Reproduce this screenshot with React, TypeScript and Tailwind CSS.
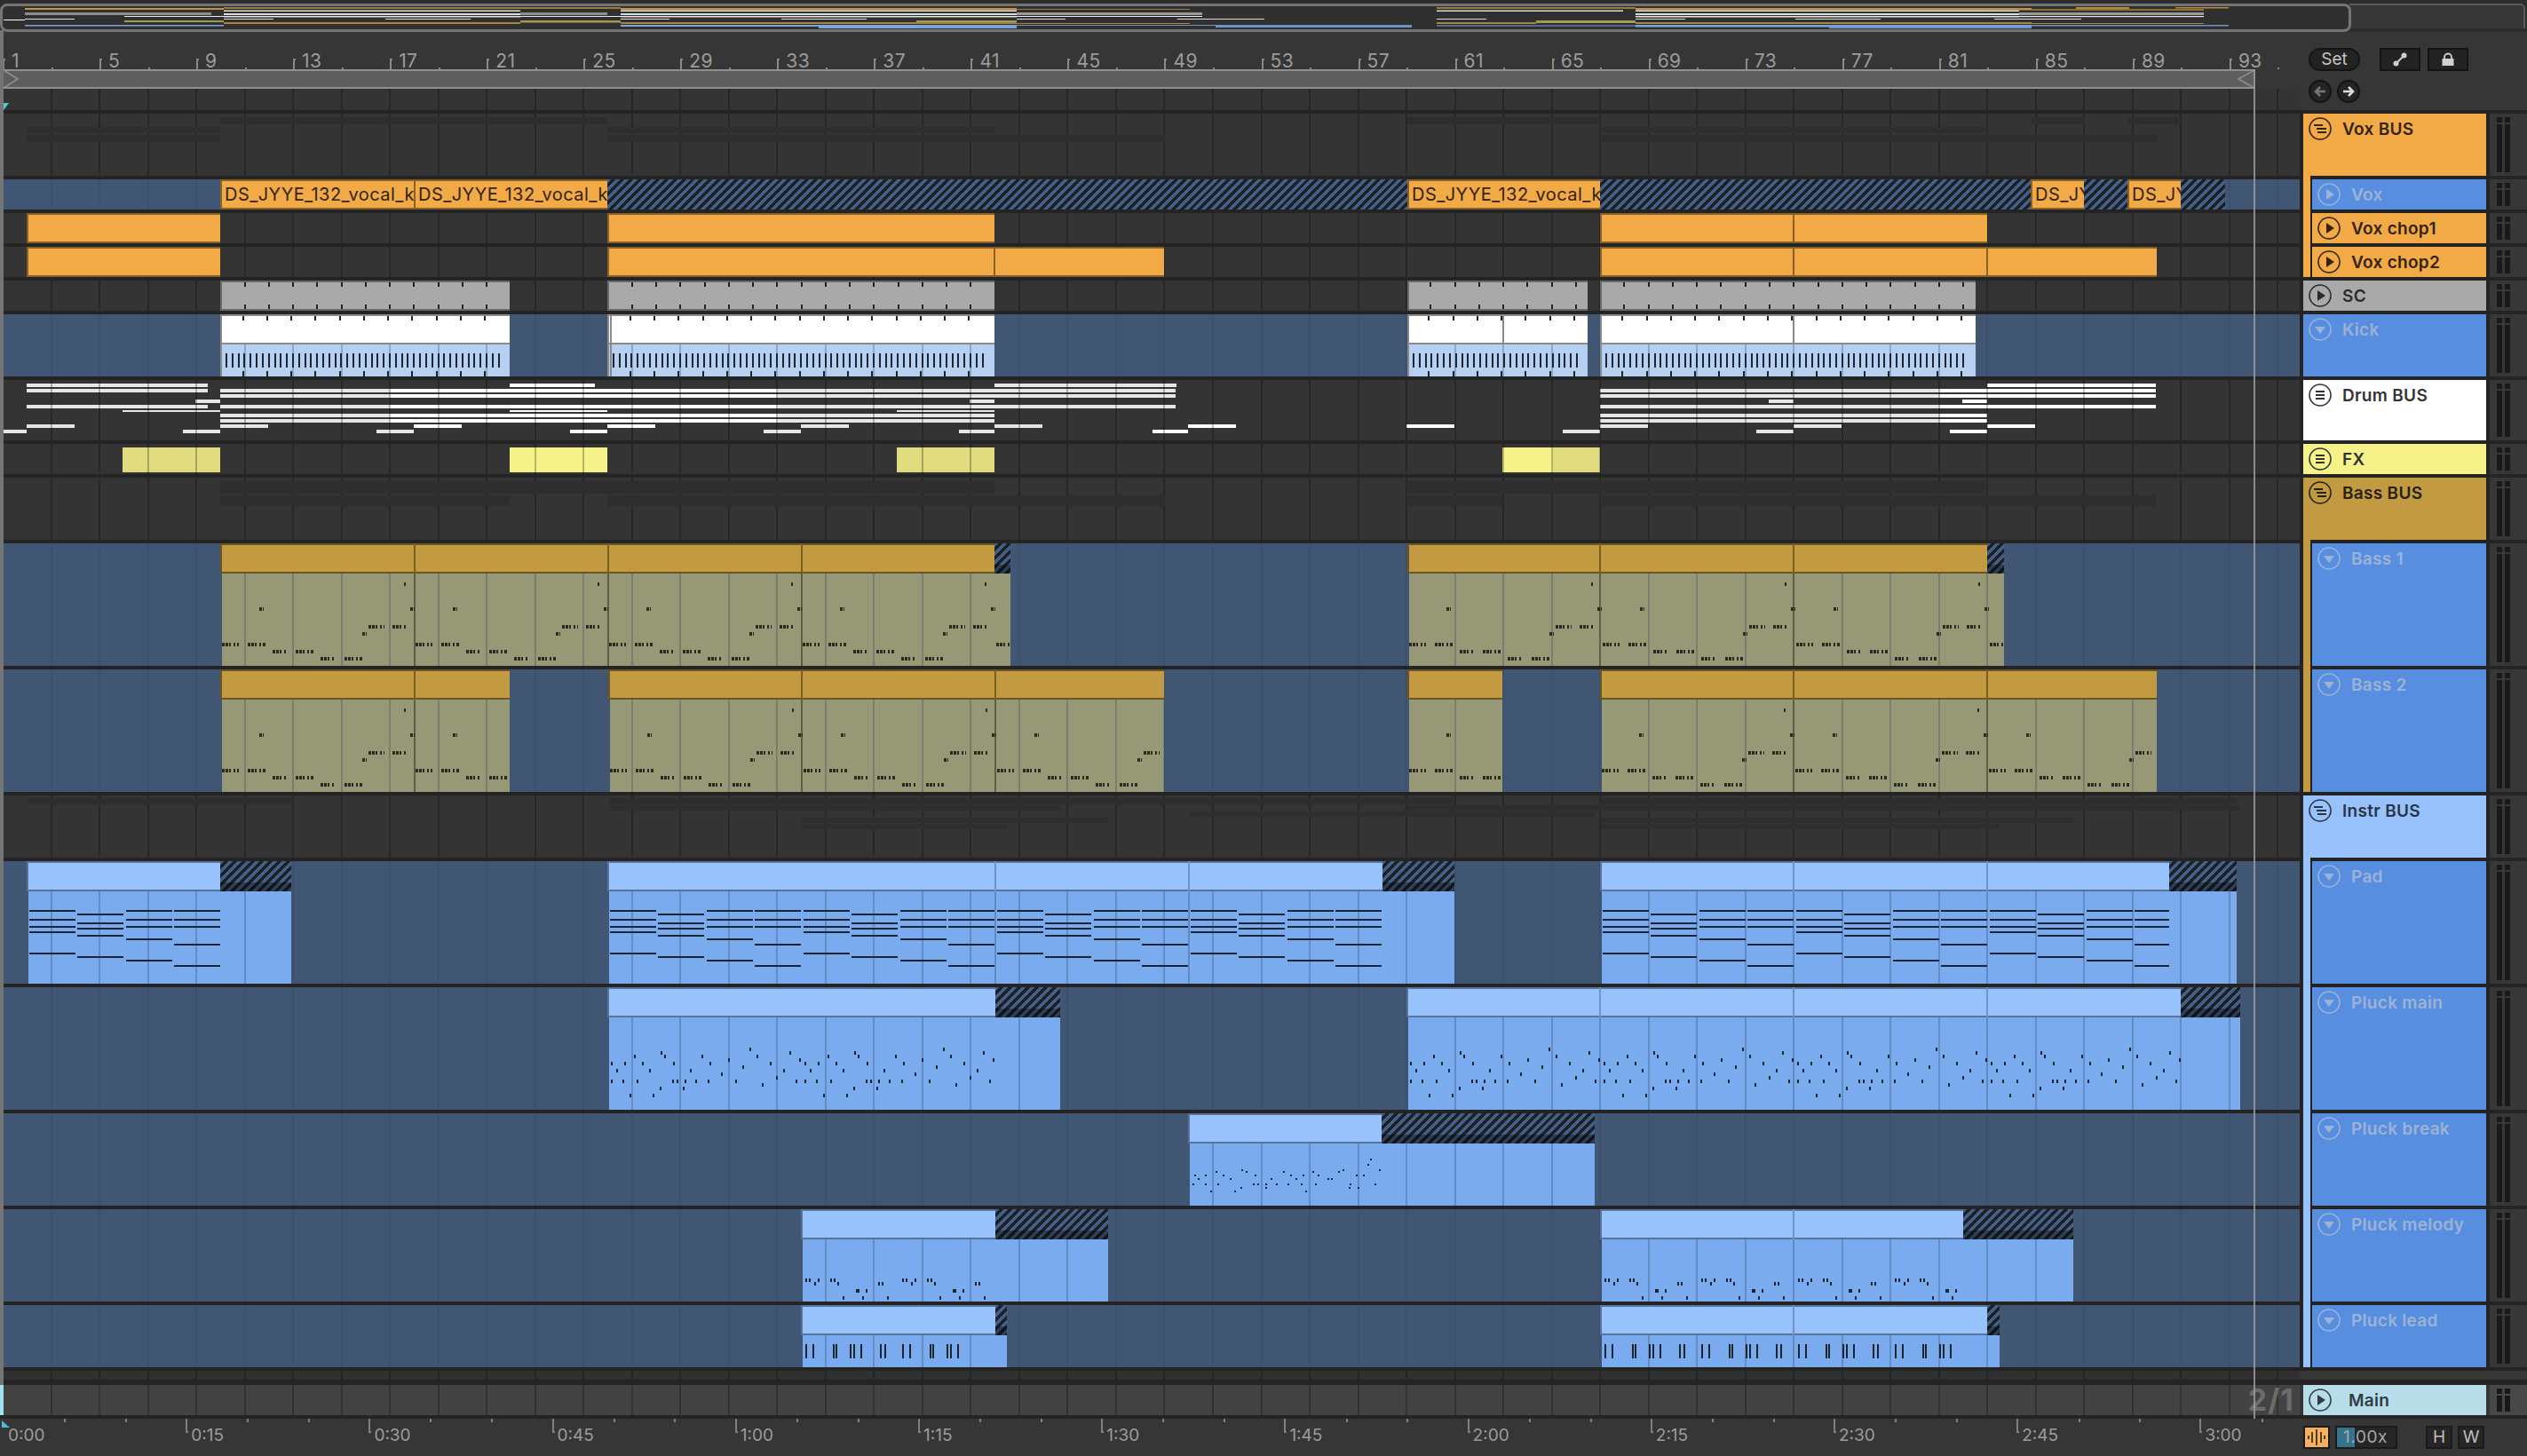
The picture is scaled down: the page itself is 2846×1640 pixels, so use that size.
import React from "react";

type Block = { x0: number; x1: number; head: number; splits?: number[] };
type Seg = [number, number];

const gridXs = Array.from({ length: 47 }, (_, i) => 3 + 54.52 * (i + 1));
const barX = (b: number) => 3 + 27.26 * (b - 1);

function Grid({ tone }: { tone: "dark" | "blue" }) {
  const cls = tone === "dark" ? "bg-black/25" : "bg-[rgba(50,70,100,0.3)]";
  return (
    <>
      {gridXs.map((x) => (
        <div key={x} className={`absolute top-0 bottom-0 w-[2px] ${cls}`} style={{ left: x - 1 }} />
      ))}
    </>
  );
}

/* ---------- midi note drawings ---------- */

function BassNotes({ w }: { w: number }) {
  const runs: [number, number, number][] = [
    [0, 19, 78], [29, 49, 78], [57, 73, 86], [83, 104, 86], [111, 127, 94], [138, 159, 94],
    [158, 163, 66], [165, 183, 58], [192, 209, 58], [42, 47, 38], [212, 217, 38], [205, 207, 10],
  ];
  const reps = Math.ceil(w / 218) + 1;
  return (
    <>
      {Array.from({ length: reps }).flatMap((_, r) =>
        runs.map(([a, b, y], i) => (
          <line
            key={`${r}-${i}`}
            x1={a + r * 218}
            x2={b + r * 218}
            y1={y + 2}
            y2={y + 2}
            stroke="#2b2b23"
            strokeWidth={4}
            strokeDasharray="3 1 3 1 2 3 2 2"
          />
        )),
      )}
    </>
  );
}

function PadNotes({ w }: { w: number }) {
  const pattern = [
    [21, 31, 39, 45, 69],
    [25, 35, 41, 49, 73],
    [21, 31, 39, 53, 77],
    [21, 31, 39, 59, 83],
  ];
  const n = Math.round(w / 54.5);
  return (
    <>
      {Array.from({ length: n }).flatMap((_, i) =>
        pattern[i % 4].map((y) => (
          <rect
            key={`${i}-${y}`}
            x={i * 54.5 + 0.5}
            y={y}
            width={Math.min(52, w - i * 54.5 - 0.5)}
            height={2}
            fill="#1b2431"
          />
        )),
      )}
    </>
  );
}

const pluckMain: [number, number][] = [
  [58, 38], [28, 42], [62, 42], [104, 42], [2, 50], [17, 50], [37, 50], [72, 50], [113, 50], [8, 58], [45, 58], [91, 58],
  [2, 70], [15, 70], [31, 70], [71, 70], [76, 70], [85, 70], [97, 70], [111, 70], [57, 78], [83, 78], [23, 86], [49, 86],
  [126, 62], [134, 46], [142, 70], [150, 54], [158, 34], [166, 42], [172, 74], [181, 50], [188, 66], [196, 58], [203, 38], [210, 70], [214, 46],
];

function PluckMainNotes({ w }: { w: number }) {
  const reps = Math.ceil(w / 218);
  return (
    <>
      {Array.from({ length: reps }).flatMap((_, r) =>
        pluckMain
          .filter(([x]) => x + r * 218 < w)
          .map(([x, y], i) => <rect key={`${r}-${i}`} x={x + r * 218} y={y} width={2} height={4} fill="#1b2431" />),
      )}
    </>
  );
}

const breakNotes: [number, number][] = [
  [5, 35], [9, 39], [17, 35], [3, 45], [17, 45], [23, 53], [29, 31], [37, 35], [31, 45], [45, 39], [50, 53], [57, 49], [58, 29], [63, 31],
  [73, 35], [71, 45], [76, 45], [85, 45], [85, 49], [91, 39], [97, 45], [105, 31], [113, 35], [110, 45], [119, 39], [127, 35], [125, 45],
  [130, 53], [138, 31], [144, 35], [141, 45], [155, 39], [159, 39], [167, 31], [172, 29], [180, 45], [179, 49], [189, 49], [187, 35], [195, 35],
  [200, 23], [203, 17], [213, 29], [208, 45],
];

function BreakNotes() {
  return (
    <>
      {breakNotes.map(([x, y], i) => (
        <rect key={i} x={x} y={y} width={2} height={2} fill="#1b2431" />
      ))}
    </>
  );
}

const melody: [number, number][] = [
  [3, 44], [7, 44], [17, 44], [13, 48], [31, 44], [35, 44], [39, 48], [45, 64], [60, 56], [62, 56], [71, 56], [67, 64], [85, 48], [89, 48], [95, 64],
];

function MelodyNotes({ w }: { w: number }) {
  const reps = Math.ceil(w / 109);
  return (
    <>
      {Array.from({ length: reps }).flatMap((_, r) =>
        melody
          .filter(([x]) => x + r * 109 < w)
          .map(([x, y], i) => <rect key={`${r}-${i}`} x={x + r * 109} y={y} width={2} height={4} fill="#1b2431" />),
      )}
    </>
  );
}

function LeadNotes({ w }: { w: number }) {
  const xs = [3, 11, 34, 37, 53, 57, 65, 87, 92];
  const reps = Math.ceil(w / 109);
  return (
    <>
      {Array.from({ length: reps }).flatMap((_, r) =>
        xs
          .filter((x) => x + r * 109 < w - 34)
          .map((x) => <rect key={`${r}-${x}`} x={x + r * 109} y={10} width={2} height={16} fill="#1b2431" />),
      )}
    </>
  );
}

/* ---------- clip lanes ---------- */

const GOLD = {
  edge: "bg-[#6d5522]",
  head: "bg-[#c19a41]",
  body: "bg-[#979875]",
  split: "bg-[#7a5f22]",
  bodySplit: "bg-[#5f5f48]",
  left: "bg-[#6d5522]",
};
const BLUE = {
  edge: "bg-[#56749c]",
  head: "bg-[#97c2fb]",
  body: "bg-[#7aabee]",
  split: "bg-[#6f94c4]",
  bodySplit: "bg-[#5f8ac2]",
  left: "bg-[#506c92]",
};

const HATCH = "bg-[repeating-linear-gradient(135deg,#42608a_0_3.5px,#1e2024_3.5px_7px)]";

function ClipLane({
  h,
  blocks,
  pal,
  notes,
}: {
  h: number;
  blocks: Block[];
  pal: typeof GOLD;
  notes: (w: number) => React.ReactNode;
}) {
  return (
    <div className="relative w-[2590px] overflow-hidden bg-[#415673]" style={{ height: h }}>
      {blocks.map((b) => (
        <div key={b.x0} className={`absolute top-[34px] bottom-0 ${pal.body}`} style={{ left: b.x0, width: b.x1 - b.x0 }} />
      ))}
      <Grid tone="blue" />
      {blocks.map((b) => (
        <React.Fragment key={b.x0}>
          <div className={`absolute top-0 h-[34px] ${pal.edge}`} style={{ left: b.x0 - 2, width: b.head - b.x0 + 2 }}>
            <div className={`absolute left-[2px] right-0 top-[2px] bottom-[2px] ${pal.head}`} />
          </div>
          {(b.splits ?? []).map((s) => (
            <React.Fragment key={s}>
              <div className={`absolute top-0 h-[34px] w-[2px] ${pal.split}`} style={{ left: s - 1 }} />
              <div className={`absolute top-[34px] bottom-0 w-[2px] ${pal.bodySplit}`} style={{ left: s - 1 }} />
            </React.Fragment>
          ))}
          {b.x1 > b.head && (
            <div className={`absolute top-0 h-[34px] ${HATCH}`} style={{ left: b.head, width: b.x1 - b.head }}>
              <div className="absolute left-0 right-0 bottom-0 h-[10px] bg-black/35" />
            </div>
          )}
          <svg
            className="absolute top-[34px]"
            style={{ left: b.x0 }}
            width={b.x1 - b.x0}
            height={h - 34}
            shapeRendering="crispEdges"
          >
            {notes(b.head - b.x0)}
          </svg>
        </React.Fragment>
      ))}
    </div>
  );
}

function DarkLane({ h, children, under }: { h: number; children?: React.ReactNode; under?: React.ReactNode }) {
  return (
    <div className="relative w-[2590px] overflow-hidden bg-[#343434]" style={{ height: h }}>
      {under}
      <Grid tone="dark" />
      {children}
    </div>
  );
}

function Shades({ rows }: { rows: [number, number, Seg[]][] }) {
  return (
    <>
      {rows.flatMap(([y, hh, segs], r) =>
        segs.map(([a, b]) => (
          <div key={`${r}-${a}`} className="absolute bg-[#2e2e2e]" style={{ left: a, width: b - a, top: y, height: hh }} />
        )),
      )}
    </>
  );
}

function VoxLane() {
  const ds: [number, number][] = [
    [248, 466],
    [466, 684],
    [1585, 1802],
    [2287, 2347],
    [2396, 2456],
  ];
  const hatch: Seg[] = [
    [684, 1585],
    [1802, 2287],
    [2347, 2396],
    [2456, 2506],
  ];
  return (
    <div className="relative h-[34px] w-[2590px] overflow-hidden bg-[#415673]">
      <Grid tone="blue" />
      {hatch.map(([a, b]) => (
        <div key={a} className={`absolute top-0 bottom-0 ${HATCH}`} style={{ left: a, width: b - a }} />
      ))}
      {ds.map(([a, b]) => (
        <div
          key={a}
          className="absolute top-0 bottom-0 overflow-hidden border-y-2 border-l-2 border-[#86622a] bg-[#f1aa46] pl-[3px] text-[20px] leading-[31px] tracking-[0.45px] whitespace-nowrap text-[#33230c]"
          style={{ left: a, width: b - a }}
        >
          DS_JYYE_132_vocal_k
        </div>
      ))}
    </div>
  );
}

function ChopLane({ blocks }: { blocks: Block[] }) {
  return (
    <DarkLane h={34}>
      {blocks.map((b) => (
        <div
          key={b.x0}
          className="absolute top-0 bottom-0 border-y-2 border-l-2 border-[#86622a] bg-[#f1aa46]"
          style={{ left: b.x0, width: b.x1 - b.x0 }}
        />
      ))}
      {blocks.flatMap((b) =>
        (b.splits ?? []).map((s) => <div key={s} className="absolute top-0 bottom-0 w-[2px] bg-[#86622a]" style={{ left: s - 1 }} />),
      )}
    </DarkLane>
  );
}

const drumClips: { x0: number; x1: number; splits: number[] }[] = [
  { x0: 248, x1: 574, splits: [] },
  { x0: 684, x1: 1120, splits: [] },
  { x0: 1585, x1: 1788, splits: [1693] },
  { x0: 1802, x1: 2225, splits: [2020] },
];

function barTicks(a: number, b: number) {
  const out: number[] = [];
  for (let i = 1; i < 100; i++) {
    const x = barX(i);
    if (x > a + 6 && x < b - 3) out.push(x - a);
  }
  return out;
}

function ScLane() {
  return (
    <DarkLane h={34}>
      {drumClips.map((c) => (
        <div
          key={c.x0}
          className="absolute top-0 bottom-0 border-y-2 border-l-2 border-[#6a6a6a] bg-[#a9a9a9]"
          style={{ left: c.x0, width: c.x1 - c.x0 }}
        >
          {barTicks(c.x0, c.x1).map((t) => (
            <React.Fragment key={t}>
              <div className="absolute top-0 h-[5px] w-[2px] bg-[#222]" style={{ left: t - 3 }} />
              <div className="absolute bottom-0 h-[5px] w-[2px] bg-[#222]" style={{ left: t - 3 }} />
            </React.Fragment>
          ))}
        </div>
      ))}
    </DarkLane>
  );
}

function KickLane() {
  return (
    <div className="relative h-[70px] w-[2590px] overflow-hidden bg-[#415673]">
      {drumClips.map((c) => (
        <div key={c.x0} className="absolute top-[34px] bottom-0 bg-[#b6d0f1]" style={{ left: c.x0, width: c.x1 - c.x0 }} />
      ))}
      <Grid tone="blue" />
      {drumClips.map((c) => {
        const w = c.x1 - c.x0;
        const notes = Array.from({ length: Math.floor((w - 8) / 6.815) }, (_, i) => 6 + i * 6.815);
        return (
          <div key={c.x0} className="absolute top-0 bottom-0" style={{ left: c.x0, width: w }}>
            <div className="absolute left-0 right-0 top-0 h-[34px] border-y-2 border-l-2 border-[#8a8a8a] bg-white" />
            <div className="absolute left-0 top-[34px] bottom-0 w-[2px] bg-[#8a8a8a]" />
            {c.x0 === 684 && <div className="absolute left-[3px] top-0 bottom-0 w-[2px] bg-[#8a8a8a]" />}
            {c.splits.map((s) => (
              <div key={s} className="absolute top-0 h-[34px] w-[2px] bg-[#8a8a8a]" style={{ left: s - c.x0 - 1 }} />
            ))}
            {barTicks(c.x0, c.x1).map((t) => (
              <React.Fragment key={t}>
                <div className="absolute top-[2px] h-[5px] w-[2px] bg-[#222]" style={{ left: t - 3 }} />
                <div className="absolute bottom-0 h-[6px] w-[2px] bg-[#222]" style={{ left: t - 3 }} />
              </React.Fragment>
            ))}
            <svg className="absolute left-0 top-[44px]" width={w} height={16} shapeRendering="crispEdges">
              {notes.map((n) => (
                <rect key={n} x={n} y={0} width={2} height={16} fill="#1d2530" />
              ))}
            </svg>
          </div>
        );
      })}
    </div>
  );
}

const G = "bg-[#e6e6e6]";
const W = "bg-white";
const drumRows: [number, number, [number, number, string][]][] = [
  [4, 4, [[30, 234, G], [574, 670, W], [1120, 1325, G], [2238, 2428, W]]],
  [10, 4, [[30, 234, G], [248, 439, G], [439, 875, W], [875, 1324, G], [1802, 2185, G], [2185, 2428, W]]],
  [16, 4, [[248, 439, G], [439, 875, W], [875, 1324, G], [1802, 2185, G], [2185, 2428, W]]],
  [22, 4, [[220, 248, G], [1092, 1120, G], [1992, 2020, G], [2210, 2238, W]]],
  [28, 4, [[30, 234, G], [248, 439, G], [439, 875, W], [875, 1324, G], [1802, 2185, G], [2185, 2428, W]]],
  [34, 2, [[138, 248, G], [574, 684, W], [1010, 1120, G]]],
  [38, 4, [[248, 439, G], [439, 875, W], [875, 1120, G], [1802, 2185, G], [2185, 2238, W]]],
  [44, 4, [[248, 439, G], [439, 875, W], [875, 1120, G], [1802, 2185, G], [2185, 2238, W]]],
  [50, 4, [[30, 84, G], [248, 302, G], [466, 520, W], [684, 738, W], [902, 956, G], [1120, 1174, G], [1338, 1392, W], [1584, 1638, W], [1802, 1856, G], [2020, 2074, G], [2238, 2292, W]]],
  [56, 4, [[4, 30, G], [206, 248, G], [424, 466, G], [642, 684, W], [860, 902, G], [1080, 1120, G], [1298, 1338, W], [1760, 1802, G], [1978, 2020, G], [2196, 2238, W]]],
];

function DrumLane() {
  return (
    <DarkLane
      h={68}
      under={drumRows.flatMap(([y, hh, segs]) =>
        segs.map(([a, b, c]) => <div key={`${y}-${a}`} className={`absolute ${c}`} style={{ left: a, width: b - a, top: y, height: hh }} />),
      )}
    />
  );
}

function FxLane() {
  const clips: [number, number, string][] = [
    [138, 248, "bg-[#dfdb7e]"],
    [574, 684, "bg-[#f6f28a]"],
    [1010, 1120, "bg-[#dfdb7e]"],
    [1692, 1749, "bg-[#f6f28a]"],
    [1749, 1802, "bg-[#dfdb7e]"],
  ];
  return (
    <DarkLane
      h={34}
      under={clips.map(([a, b, c]) => (
        <div key={a} className={`absolute top-[4px] h-[28px] ${c}`} style={{ left: a, width: b - a }} />
      ))}
    />
  );
}

/* ---------- track headers ---------- */

function CircleIcon({ color, kind }: { color: string; kind: "stair" | "equal" | "play" | "down" }) {
  return (
    <svg width={26} height={26} viewBox="0 0 26 26" className="shrink-0">
      <circle cx={13} cy={13} r={12} fill="none" stroke={color} strokeWidth={1.6} />
      {kind === "stair" && (
        <g stroke={color} strokeWidth={2}>
          <line x1={6} x2={16} y1={9} y2={9} />
          <line x1={9} x2={20} y1={13} y2={13} />
          <line x1={10} x2={20} y1={17} y2={17} />
        </g>
      )}
      {kind === "equal" && (
        <g stroke={color} strokeWidth={2}>
          <line x1={8} x2={18} y1={9} y2={9} />
          <line x1={8} x2={18} y1={13} y2={13} />
          <line x1={8} x2={18} y1={17} y2={17} />
        </g>
      )}
      {kind === "play" && <path d="M10 7 L19 13 L10 19 Z" fill={color} />}
      {kind === "down" && <path d="M7 10 L19 10 L13 18 Z" fill={color} />}
    </svg>
  );
}

function Meter({ light }: { light?: boolean }) {
  return (
    <div className={`flex h-full flex-1 gap-[3px] pl-[8px] pt-[4px] pb-[4px] ${light ? "bg-[#484848]" : "bg-[#373737]"}`}>
      {[0, 1].map((i) => (
        <div key={i} className="flex w-[6px] flex-col gap-[2px]">
          <div className="h-[6px] bg-[#191919]" />
          <div className="flex-1 bg-[#191919]" />
        </div>
      ))}
    </div>
  );
}

type Head = {
  name: string;
  bg: string;
  text: string;
  icon: string;
  kind: "stair" | "equal" | "play" | "down";
  strip?: string;
};

function TrackHead({ name, bg, text, icon, kind, strip }: Head) {
  const label = (
    <div className="flex h-[34px] items-start gap-[12px] pl-[6px] pt-[4px]">
      <CircleIcon color={icon} kind={kind} />
      <span className={`mt-[1px] text-[19px] leading-[26px] font-semibold tracking-[0.3px] ${text}`}>{name}</span>
    </div>
  );
  if (strip) {
    return (
      <div className="ml-[4px] flex w-[206px]">
        <div className={`relative w-[8px] ${strip}`}>
          <div className={`absolute -top-[4px] left-0 h-[4px] w-[8px] ${strip}`} />
        </div>
        <div className={`ml-[2px] flex-1 ${bg}`}>{label}</div>
      </div>
    );
  }
  return <div className={`ml-[4px] w-[206px] ${bg}`}>{label}</div>;
}

function Row({ head, children }: { head: Head; children: React.ReactNode }) {
  return (
    <div className="flex">
      {children}
      <TrackHead {...head} />
      <div className="ml-[4px] flex flex-1">
        <Meter />
      </div>
    </div>
  );
}

const dimText = "text-[#9db3d6]";
const dimIcon = "#9db3d6";
const blueBg = "bg-[#578ee0]";
const ORANGE = "bg-[#f1aa46]";
const goldBg = "bg-[#c19a41]";
const sky = "bg-[#97c2fb]";
const brown = "#33230c";

/* ---------- top and bottom ---------- */

const overviewRects: [number, number, number, number, string][] = [
  [28, 252, 9, 2, "#c8923f"], [252, 699, 8, 2, "#9c7a3c"], [699, 1145, 9, 2.5, "#c8923f"], [1145, 1340, 10, 1, "#9c7a3c"],
  [1618, 1842, 8, 2, "#9c7a3c"], [1842, 2288, 9, 2.5, "#c8923f"], [2288, 2482, 10, 2, "#8f7034"], [2338, 2398, 8, 2, "#b88a40"], [2450, 2510, 8, 1.5, "#b88a40"],
  [252, 586, 11.5, 1.5, "#dddddd"], [699, 1145, 11.5, 1.5, "#dddddd"], [1618, 1828, 11.5, 1.5, "#dddddd"], [1842, 2274, 11.5, 1.5, "#dddddd"],
  [28, 238, 14, 3, "#8e8e8e"], [586, 684, 14, 3, "#8e8e8e"], [1145, 1354, 14, 3, "#9a9a9a"], [2274, 2482, 14, 3, "#9a9a9a"],
  [252, 586, 15, 2, "#dddddd"], [699, 1145, 15, 2, "#dddddd"], [1842, 2274, 15, 2, "#dddddd"],
  [140, 1354, 18, 1, "#e8e8e8"], [1842, 2482, 18, 1.2, "#e8e8e8"], [252, 586, 19.2, 0.8, "#999999"], [699, 1145, 19.2, 0.8, "#999999"], [1842, 2274, 19.2, 0.8, "#999999"],
  [28, 84, 21, 1, "#dddddd"], [252, 308, 21, 1, "#dddddd"], [434, 530, 21, 1, "#dddddd"], [699, 754, 21, 1, "#dddddd"], [880, 976, 21, 1, "#dddddd"],
  [1145, 1200, 21, 1, "#dddddd"], [1326, 1424, 21, 1, "#dddddd"], [1618, 1674, 21, 1, "#dddddd"], [1842, 1898, 21, 1, "#dddddd"], [2022, 2118, 21, 1, "#dddddd"], [2246, 2344, 21, 1, "#dddddd"],
  [4, 28, 22, 1, "#ffffff"],
  [140, 252, 23, 2, "#a29a50"], [586, 699, 23, 2.5, "#a29a50"], [1032, 1145, 23, 2.5, "#a29a50"], [1730, 1842, 23, 3, "#a29a50"],
  [252, 586, 25, 2, "#a8853a"], [699, 1145, 25, 2, "#a8853a"], [1145, 1340, 26, 1, "#a8853a"], [1618, 1730, 25, 2, "#a8853a"], [1842, 2288, 25, 2, "#a8853a"], [2288, 2482, 26, 1, "#a8853a"],
  [28, 252, 28, 1.5, "#7aa6e0"], [699, 1145, 28, 2, "#7aa6e0"], [922, 1145, 29.5, 2.5, "#7aa6e0"], [1145, 1369, 28, 1, "#6d93c8"], [1369, 1590, 28, 3, "#6d93c8"],
  [1618, 1842, 28, 2, "#4f6a92"], [1842, 2288, 28, 2.5, "#7aa6e0"], [2060, 2288, 30.5, 1.5, "#7aa6e0"], [2288, 2510, 28, 1.5, "#6d93c8"],
];

function Overview() {
  return (
    <div className="relative h-[36px] w-full bg-[#2d2d2d]">
      <div className="absolute left-[2646px] right-[2px] top-[4px] h-[28px] rounded-tr-[6px] border-t-2 border-r-2 border-[#5c5c5c] bg-[#363636]" />
      <div className="absolute left-0 top-[4px] h-[32px] w-[2648px] rounded-[8px] border-[3px] border-[#757575] bg-[#303030]" />
      <svg className="absolute left-0 top-0" width={2646} height={36}>
        {overviewRects.map(([a, b, y, hh, c], i) => (
          <rect key={i} x={a} y={y} width={b - a} height={hh} fill={c} />
        ))}
      </svg>
    </div>
  );
}

function Ruler() {
  const labels = Array.from({ length: 24 }, (_, i) => 1 + i * 4);
  return (
    <div className="relative h-[42px] w-[2590px]">
      {labels.map((b) => {
        const x = barX(b);
        return (
          <React.Fragment key={b}>
            <div className="absolute top-[30px] bottom-0 w-[2px] bg-[#8a8a8a]" style={{ left: x }} />
            <div className="absolute top-[30px] h-[2px] w-[3px] bg-[#8a8a8a]" style={{ left: x }} />
            <div className="absolute bottom-0 h-[2px] w-[2px] bg-[#8a8a8a]" style={{ left: x + 54.5 }} />
            <span className="absolute top-[21px] text-[21px] leading-[24px] tracking-[0.4px] text-[#9c9c9c]" style={{ left: x + 10 }}>
              {b}
            </span>
          </React.Fragment>
        );
      })}
    </div>
  );
}

function LoopBar() {
  return (
    <div className="relative h-[22px] w-[2539px] border-y-2 border-[#8f8f8f] bg-[#5e5e5e]">
      <svg className="absolute left-[2px] -top-[2px]" width={20} height={22}>
        <path d="M2 1 L18 11 L2 21" fill="none" stroke="#8f8f8f" strokeWidth={1.5} />
      </svg>
      <svg className="absolute right-0 -top-[2px]" width={20} height={22}>
        <path d="M20 1 L2 11 L20 21" fill="none" stroke="#8f8f8f" strokeWidth={1.5} />
      </svg>
    </div>
  );
}

function TopControls() {
  return (
    <div className="ml-[10px] flex flex-col gap-[10px] pt-[18px]">
      <div className="flex items-center">
        <div className="flex h-[26px] w-[58px] items-center justify-center rounded-full border-2 border-[#141414] bg-[#222] text-[19px] text-[#c4c4c4]">
          Set
        </div>
        <div className="ml-[22px] flex h-[26px] w-[46px] items-center justify-center border-2 border-[#141414] bg-[#232323]">
          <svg width={16} height={16} viewBox="0 0 16 16">
            <line x1={3} y1={13} x2={13} y2={3} stroke="#d0d0d0" strokeWidth={2} />
            <circle cx={12.5} cy={3.5} r={3} fill="#d0d0d0" />
            <circle cx={3.5} cy={12.5} r={3} fill="#d0d0d0" />
          </svg>
        </div>
        <div className="ml-[8px] flex h-[26px] w-[46px] items-center justify-center border-2 border-[#141414] bg-[#232323]">
          <svg width={16} height={16} viewBox="0 0 16 16">
            <path d="M4 7 V5.5 a4 4 0 0 1 8 0 V7" fill="none" stroke="#d0d0d0" strokeWidth={1.8} />
            <rect x={1.5} y={7} width={13} height={8} fill="#d0d0d0" />
          </svg>
        </div>
      </div>
      <div className="flex gap-[6px]">
        {[
          { d: "M15 9 H6 M9 4 L4 9 L9 14", c: "#777777" },
          { d: "M3 9 H12 M9 4 L14 9 L9 14", c: "#dddddd" },
        ].map((a) => (
          <div key={a.d} className="flex h-[26px] w-[26px] items-center justify-center rounded-full border-2 border-[#141414] bg-[#242424]">
            <svg width={18} height={18} viewBox="0 0 18 18">
              <path d={a.d} fill="none" stroke={a.c} strokeWidth={2.6} />
            </svg>
          </div>
        ))}
      </div>
    </div>
  );
}

function TimeRuler() {
  const labels = ["0:00", "0:15", "0:30", "0:45", "1:00", "1:15", "1:30", "1:45", "2:00", "2:15", "2:30", "2:45", "3:00"];
  const minor = Array.from({ length: 38 }, (_, i) => 3 + 68.75 * i).filter((_, i) => i % 3 !== 0);
  return (
    <div className="relative h-[42px] w-[2590px]">
      {minor.map((x) => (
        <div key={x} className="absolute top-0 h-[4px] w-[2px] bg-[#808080]" style={{ left: x }} />
      ))}
      {labels.map((l, i) => {
        const x = 3 + 206.2 * i;
        return (
          <React.Fragment key={l}>
            {i > 0 && (
              <>
                <div className="absolute top-0 h-[16px] w-[2px] bg-[#808080]" style={{ left: x }} />
                <div className="absolute top-[14px] h-[2px] w-[3px] bg-[#808080]" style={{ left: x }} />
              </>
            )}
            <span className="absolute top-[7px] text-[19px] leading-[24px] text-[#9c9c9c]" style={{ left: x + 6 }}>
              {l}
            </span>
          </React.Fragment>
        );
      })}
    </div>
  );
}

function BottomControls() {
  return (
    <div className="ml-[4px] flex items-start pt-[8px]">
      <div className="flex h-[26px] w-[30px] items-center justify-center border-2 border-[#1b1b1b] bg-[#f6b160]">
        <svg width={22} height={18} viewBox="0 0 22 18">
          <g stroke="#2a2010" strokeWidth={1.6}>
            <line x1={2} x2={2} y1={7} y2={11} />
            <line x1={6} x2={6} y1={3} y2={15} />
            <line x1={11} x2={11} y1={0} y2={18} />
            <line x1={16} x2={16} y1={3} y2={15} />
            <line x1={20} x2={20} y1={7} y2={11} />
          </g>
        </svg>
      </div>
      <div className="relative ml-[6px] flex h-[26px] w-[70px] items-center overflow-hidden border-2 border-[#1b1b1b] bg-[#262626] pl-[7px] text-[19px] tracking-[0.6px] text-[#a8a8a8]">
        <div className="absolute left-0 top-0 bottom-0 w-[20px] bg-[#35748a]" />
        <span className="relative">1.00x</span>
      </div>
      {["H", "W"].map((k, i) => (
        <div
          key={k}
          className={`flex h-[26px] w-[30px] items-center justify-center border-2 border-[#1b1b1b] bg-[#262626] text-[19px] text-[#bdbdbd] ${i === 0 ? "ml-[32px]" : "ml-[6px]"}`}
        >
          {k}
        </div>
      ))}
    </div>
  );
}

/* ---------- data ---------- */

const bass1: Block[] = [
  { x0: 250, x1: 1138, head: 1120, splits: [467, 685, 903] },
  { x0: 1587, x1: 2257, head: 2238, splits: [1802, 2020] },
];
const bass2: Block[] = [
  { x0: 250, x1: 574, head: 574, splits: [467] },
  { x0: 687, x1: 1311, head: 1311, splits: [903, 1121] },
  { x0: 1587, x1: 1692, head: 1692 },
  { x0: 1804, x1: 2429, head: 2429, splits: [2020, 2238] },
];
const pad: Block[] = [
  { x0: 32, x1: 328, head: 248 },
  { x0: 686, x1: 1638, head: 1557, splits: [1121, 1339] },
  { x0: 1804, x1: 2519, head: 2443, splits: [2020, 2238] },
];
const pluckM: Block[] = [
  { x0: 686, x1: 1194, head: 1121 },
  { x0: 1586, x1: 2523, head: 2456, splits: [1802, 2020, 2238] },
];
const pluckB: Block[] = [{ x0: 1340, x1: 1796, head: 1556 }];
const pluckMel: Block[] = [
  { x0: 904, x1: 1248, head: 1121 },
  { x0: 1804, x1: 2335, head: 2211, splits: [2020] },
];
const pluckL: Block[] = [
  { x0: 904, x1: 1134, head: 1121 },
  { x0: 1804, x1: 2252, head: 2238, splits: [2020] },
];

const head = (name: string, strip?: string): Head => ({
  name,
  bg: blueBg,
  text: dimText,
  icon: dimIcon,
  kind: "down",
  strip,
});

export default function App() {
  return (
    <div className="relative flex h-[1640px] w-[2846px] flex-col overflow-hidden bg-[#363636] [font-family:Inter,sans-serif]">
      <Overview />

      {/* ruler, loop bar and controls */}
      <div className="flex h-[88px]">
        <div className="flex w-[2590px] flex-col">
          <Ruler />
          <LoopBar />
          <div className="relative h-[24px] w-[2590px] overflow-hidden bg-[#343434]">
            <Grid tone="dark" />
          </div>
        </div>
        <TopControls />
      </div>

      {/* tracks */}
      <div className="flex flex-col gap-[4px] bg-[#242424] py-[4px]">
        <Row head={{ name: "Vox BUS", bg: ORANGE, text: "text-[#33230c]", icon: brown, kind: "stair" }}>
          <DarkLane h={70}>
            <Shades
              rows={[
                [4, 8, [[248, 684], [1585, 1802], [2287, 2347], [2396, 2456]]],
                [15, 7, [[30, 248], [684, 1120], [1802, 2238]]],
                [24, 8, [[30, 248], [684, 1312], [1802, 2429]]],
              ]}
            />
          </DarkLane>
        </Row>
        <Row head={{ ...head("Vox", ORANGE), kind: "play" }}>
          <VoxLane />
        </Row>
        <Row head={{ name: "Vox chop1", bg: ORANGE, text: "text-[#33230c]", icon: brown, kind: "play", strip: ORANGE }}>
          <ChopLane blocks={[{ x0: 30, x1: 248, head: 248 }, { x0: 684, x1: 1120, head: 1120 }, { x0: 1802, x1: 2238, head: 2238, splits: [2020] }]} />
        </Row>
        <Row head={{ name: "Vox chop2", bg: ORANGE, text: "text-[#33230c]", icon: brown, kind: "play", strip: ORANGE }}>
          <ChopLane blocks={[{ x0: 30, x1: 248, head: 248 }, { x0: 684, x1: 1311, head: 1311, splits: [1120] }, { x0: 1802, x1: 2429, head: 2429, splits: [2020, 2238] }]} />
        </Row>
        <Row head={{ name: "SC", bg: "bg-[#a9a9a9]", text: "text-[#2a2a2a]", icon: "#2a2a2a", kind: "play" }}>
          <ScLane />
        </Row>
        <Row head={{ ...head("Kick") }}>
          <KickLane />
        </Row>
        <Row head={{ name: "Drum BUS", bg: "bg-white", text: "text-[#333]", icon: "#333333", kind: "equal" }}>
          <DrumLane />
        </Row>
        <Row head={{ name: "FX", bg: "bg-[#f6f28a]", text: "text-[#333]", icon: "#333333", kind: "equal" }}>
          <FxLane />
        </Row>
        <Row head={{ name: "Bass BUS", bg: goldBg, text: "text-[#2a2010]", icon: "#2a2010", kind: "stair" }}>
          <DarkLane h={70}>
            <Shades
              rows={[
                [4, 14, [[248, 1120], [1584, 2238]]],
                [20, 12, [[248, 574], [684, 1312], [1584, 1692], [1802, 2428]]],
              ]}
            />
          </DarkLane>
        </Row>
        <Row head={head("Bass 1", goldBg)}>
          <ClipLane h={138} blocks={bass1} pal={GOLD} notes={(w) => <BassNotes w={w} />} />
        </Row>
        <Row head={head("Bass 2", goldBg)}>
          <ClipLane h={138} blocks={bass2} pal={GOLD} notes={(w) => <BassNotes w={w} />} />
        </Row>
        <Row head={{ name: "Instr BUS", bg: sky, text: "text-[#2a3444]", icon: "#2a3444", kind: "stair" }}>
          <DarkLane h={70}>
            <Shades
              rows={[
                [3, 7, [[32, 328], [686, 1638], [1803, 2519]]],
                [11, 6, [[686, 1194], [1585, 2523]]],
                [18, 6, [[1340, 1796]]],
                [25, 6, [[903, 1248], [1803, 2335]]],
                [32, 6, [[903, 1134], [1803, 2252]]],
              ]}
            />
          </DarkLane>
        </Row>
        <Row head={head("Pad", sky)}>
          <ClipLane h={138} blocks={pad} pal={BLUE} notes={(w) => <PadNotes w={w} />} />
        </Row>
        <Row head={head("Pluck main", sky)}>
          <ClipLane h={138} blocks={pluckM} pal={BLUE} notes={(w) => <PluckMainNotes w={w} />} />
        </Row>
        <Row head={head("Pluck break", sky)}>
          <ClipLane h={104} blocks={pluckB} pal={BLUE} notes={() => <BreakNotes />} />
        </Row>
        <Row head={head("Pluck melody", sky)}>
          <ClipLane h={104} blocks={pluckMel} pal={BLUE} notes={(w) => <MelodyNotes w={w} />} />
        </Row>
        <Row head={head("Pluck lead", sky)}>
          <ClipLane h={70} blocks={pluckL} pal={BLUE} notes={(w) => <LeadNotes w={w} />} />
        </Row>
      </div>

      {/* bottom strip and main track */}
      <div className="flex h-[10px]">
        <div className="relative h-full w-[2590px] overflow-hidden bg-[#303030]">
          <Grid tone="dark" />
        </div>
        <div className="ml-[4px] h-full flex-1 bg-[#363636]" />
      </div>
      <div className="h-[6px] bg-[#242424]" />
      <div className="flex h-[34px]">
        <div className="relative h-full w-[2590px] overflow-hidden bg-[#434343]">
          <Grid tone="dark" />
          <div className="absolute left-0 top-0 bottom-0 z-10 w-[4px] bg-[#9fe2f0]" />
          <span className="absolute right-[6px] top-0 text-[34px] leading-[34px] font-bold tracking-[1px] text-[#6c6c6c]">2/1</span>
        </div>
        <div className="ml-[4px] flex w-[206px] items-start gap-[19px] bg-[#b7dde9] pl-[6px] pt-[4px]">
          <CircleIcon color="#2f3c44" kind="play" />
          <span className="mt-[1px] text-[19px] leading-[26px] font-semibold tracking-[0.3px] text-[#2f3c44]">Main</span>
        </div>
        <div className="ml-[4px] flex flex-1">
          <Meter light />
        </div>
      </div>
      <div className="h-[4px] bg-[#242424]" />

      <div className="flex flex-1">
        <TimeRuler />
        <BottomControls />
      </div>

      {/* overlays: left border, loop end line, insert markers */}
      <div className="absolute left-0 top-[34px] h-[1526px] w-[4px] bg-[#757575]" />
      <div className="absolute left-[2538px] top-[78px] h-[1520px] w-[2px] bg-[#a3a3a3]/80" />
      <svg className="absolute left-[3px] top-[116px]" width={8} height={8}>
        <path d="M1 0 H7 L1 8 Z" fill="#5cc8e0" />
      </svg>
      <svg className="absolute left-[2px] top-[1600px]" width={9} height={8}>
        <path d="M0 0 L9 8 H0 Z" fill="#4fb8d6" />
      </svg>
    </div>
  );
}
